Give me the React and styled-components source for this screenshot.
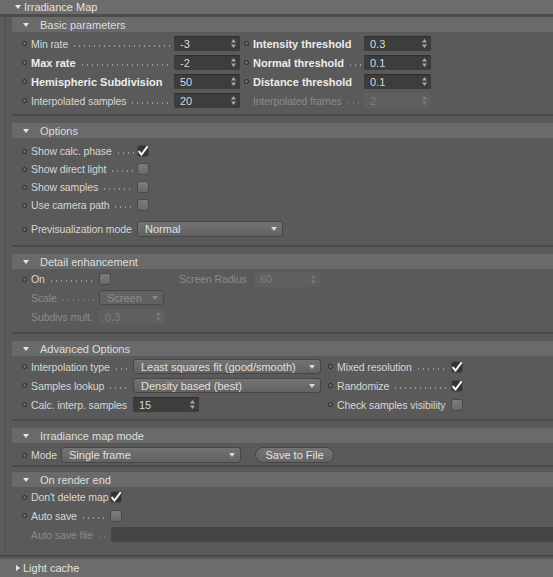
import styled, { createGlobalStyle } from 'styled-components';

const GlobalStyle = createGlobalStyle`
  html, body {
    margin: 0;
    padding: 0;
    background: #5a5a5a;
  }
  body {
    width: 553px;
    height: 577px;
    overflow: hidden;
    font-family: "Liberation Sans", Arial, sans-serif;
    font-size: 11px;
    color: #d4d4d4;
  }
`;

const Window = styled.div`
  width: 553px;
  height: 577px;
  overflow: hidden;
  background: #5a5a5a;
  display: flex;
  flex-direction: column;
`;

const GroupBar = styled.div`
  flex: none;
  height: ${(p) => p.$h || 14}px;
  background: #6c6c6c;
  display: flex;
  align-items: center;
  gap: 3px;
  padding-left: ${(p) => p.$pad}px;
  color: #e2e2e2;
  white-space: nowrap;
`;

const TriDown = styled.span`
  width: 0;
  height: 0;
  border-left: ${(p) => p.$s || 3}px solid transparent;
  border-right: ${(p) => p.$s || 3}px solid transparent;
  border-top: ${(p) => (p.$s || 3) + 1}px solid #e6e6e6;
`;

const TriRight = styled.span`
  width: 0;
  height: 0;
  border-top: 3px solid transparent;
  border-bottom: 3px solid transparent;
  border-left: 4px solid #e6e6e6;
`;

const Group = styled.div`
  flex: none;
  border-top: 3px solid #4c4c4c;
  border-bottom: 2px solid #4a4a4a;
  padding-left: 12px;
  margin-bottom: 2px;
  box-shadow: inset 4px 0 0 #5d5d5d, inset 5px 0 0 #505050;
`;

const Section = styled.div`
  border-bottom: ${(p) => (p.$last ? 'none' : '2px solid #4b4b4b')};
  margin-bottom: ${(p) => p.$mb || 0}px;
`;

const SectionHeader = styled.div`
  height: 15px;
  background: #6a6a6a;
  display: flex;
  align-items: center;
  gap: 11px;
  padding-left: 11px;
  color: #dedede;
  white-space: nowrap;
`;

const Body = styled.div`
  padding: ${(p) => p.$pt}px 0 ${(p) => p.$pb}px 10px;
`;

const Row = styled.div`
  display: flex;
  align-items: center;
  height: ${(p) => p.$h}px;
  margin-top: ${(p) => p.$mt || 0}px;
`;

const Field = styled.div`
  display: flex;
  align-items: center;
  flex: none;
  width: ${(p) => (p.$w ? `${p.$w}px` : 'auto')};
  margin-left: ${(p) => p.$ml || 0}px;
`;

const Dot = styled.span`
  flex: none;
  width: 3px;
  height: 3px;
  border-radius: 50%;
  border: 1px solid #262626;
  background: #6f6f6f;
  margin-right: 4px;
  visibility: ${(p) => (p.$off ? 'hidden' : 'visible')};
`;

const Label = styled.span`
  flex: none;
  display: flex;
  align-items: baseline;
  width: ${(p) => p.$w}px;
  margin-right: 3px;
  white-space: nowrap;
  font-size: ${(p) => (p.$bold ? 11 : 10.5)}px;
  letter-spacing: ${(p) => (p.$bold ? 0 : -0.1)}px;
  color: ${(p) => (p.$disabled ? '#8a8a8a' : p.$bold ? '#ececec' : '#d6d6d6')};
  font-weight: ${(p) => (p.$bold ? 'bold' : 'normal')};
`;

const Leader = styled.span`
  flex: 1;
  min-width: 0;
  height: 2px;
  margin-left: 4px;
  align-self: flex-end;
  margin-bottom: 3px;
  background-image: radial-gradient(circle, ${(p) => (p.$disabled ? '#787878' : '#9a9a9a')} 0.6px, transparent 1px);
  background-size: 5px 2px;
  background-repeat: repeat-x;
`;

const NumBox = styled.div`
  flex: none;
  position: relative;
  width: ${(p) => p.$w}px;
  height: 15px;
  border-radius: 2px;
  background: ${(p) => (p.$disabled ? '#5f5f5f' : '#3d3d3d')};
  box-shadow: ${(p) => (p.$disabled ? 'none' : 'inset 0 1px 1px #2e2e2e')};
  color: ${(p) => (p.$disabled ? '#7e7e7e' : '#d8d8d8')};
  display: flex;
  align-items: center;
  padding-left: 6px;
  box-sizing: border-box;
`;

const Spin = styled.svg`
  position: absolute;
  right: 4px;
  top: 3px;
`;

const TextBox = styled.div`
  flex: 1;
  height: 15px;
  background: #454545;
  border-radius: 2px 0 0 2px;
`;

const Select = styled.div`
  flex: none;
  position: relative;
  width: ${(p) => p.$w}px;
  height: ${(p) => p.$h || 15}px;
  box-sizing: border-box;
  border: 1px solid #474747;
  border-radius: 3px;
  background: ${(p) =>
    p.$disabled ? '#626262' : 'linear-gradient(#737373, #626262)'};
  color: ${(p) => (p.$disabled ? '#8c8c8c' : '#e0e0e0')};
  display: flex;
  align-items: center;
  padding-left: 7px;
  white-space: nowrap;
`;

const Caret = styled.span`
  position: absolute;
  right: 5px;
  top: 50%;
  margin-top: -2px;
  width: 0;
  height: 0;
  border-left: 3px solid transparent;
  border-right: 3px solid transparent;
  border-top: 4px solid ${(p) => (p.$disabled ? '#8a8a8a' : '#d8d8d8')};
`;

const Check = styled.span`
  flex: none;
  width: 12px;
  height: 12px;
  box-sizing: border-box;
  border-radius: 3px;
  border: 1px solid #4a4a4a;
  background: ${(p) => (p.$on ? '#333333' : 'linear-gradient(#7d7d7d, #696969)')};
  display: flex;
  align-items: center;
  justify-content: center;
`;

const Button = styled.div`
  flex: none;
  width: 79px;
  height: 16px;
  margin-left: 14px;
  box-sizing: border-box;
  border: 1px solid #454545;
  border-radius: 8px;
  background: linear-gradient(#747474, #646464);
  color: #e4e4e4;
  display: flex;
  align-items: center;
  justify-content: center;
`;

const Num = ({ value, w = 66, disabled }) => (
  <NumBox $w={w} $disabled={disabled}>
    {value}
    <Spin width="5" height="9" viewBox="0 0 5 9">
      <path d="M2.5 0 L5 3.5 L0 3.5 Z M2.5 9 L5 5.5 L0 5.5 Z" fill={disabled ? '#7a7a7a' : '#a8a8a8'} />
    </Spin>
  </NumBox>
);

const Drop = ({ value, w, h, disabled }) => (
  <Select $w={w} $h={h} $disabled={disabled}>
    {value}
    <Caret $disabled={disabled} />
  </Select>
);

const Box = ({ on }) => (
  <Check $on={on}>
    {on && (
      <svg width="10" height="10" viewBox="0 0 10 10">
        <path d="M1.2 5.6 L3.4 8.6 L9.2 0.8" stroke="#f4f4f4" strokeWidth="2" fill="none" strokeLinecap="round" strokeLinejoin="round" />
      </svg>
    )}
  </Check>
);

const Lbl = ({ w, text, bold, disabled, dots = true }) => (
  <Label $w={w} $bold={bold} $disabled={disabled}>
    {text}
    {dots && <Leader $disabled={disabled} />}
  </Label>
);

const Head = ({ title }) => (
  <SectionHeader>
    <TriDown $s={3} />
    {title}
  </SectionHeader>
);

export default function App() {
  return (
    <Window>
      <GlobalStyle />
      <GroupBar $pad={15}>
        <TriDown $s={3} />
        Irradiance Map
      </GroupBar>
      <Group>
        <Section $mb={7}>
          <Head title="Basic parameters" />
          <Body $pt={2} $pb={4}>
            <Row $h={19}>
              <Field $w={222}>
                <Dot />
                <Lbl w={140} text="Min rate" />
                <Num value="-3" />
              </Field>
              <Field>
                <Dot />
                <Lbl w={108} text="Intensity threshold" bold dots={false} />
                <Num value="0.3" w={67} />
              </Field>
            </Row>
            <Row $h={19}>
              <Field $w={222}>
                <Dot />
                <Lbl w={140} text="Max rate" bold />
                <Num value="-2" />
              </Field>
              <Field>
                <Dot />
                <Lbl w={108} text="Normal threshold" bold />
                <Num value="0.1" w={67} />
              </Field>
            </Row>
            <Row $h={19}>
              <Field $w={222}>
                <Dot />
                <Lbl w={140} text="Hemispheric Subdivision" bold dots={false} />
                <Num value="50" />
              </Field>
              <Field>
                <Dot />
                <Lbl w={108} text="Distance threshold" bold dots={false} />
                <Num value="0.1" w={67} />
              </Field>
            </Row>
            <Row $h={19}>
              <Field $w={222}>
                <Dot />
                <Lbl w={140} text="Interpolated samples" />
                <Num value="20" />
              </Field>
              <Field>
                <Dot $off />
                <Lbl w={108} text="Interpolated frames" disabled />
                <Num value="2" w={67} disabled />
              </Field>
            </Row>
          </Body>
        </Section>

        <Section $mb={7}>
          <Head title="Options" />
          <Body $pt={4} $pb={7}>
            <Row $h={18}>
              <Dot />
              <Lbl w={103} text="Show calc. phase" />
              <Box on />
            </Row>
            <Row $h={18}>
              <Dot />
              <Lbl w={103} text="Show direct light" />
              <Box />
            </Row>
            <Row $h={18}>
              <Dot />
              <Lbl w={103} text="Show samples" />
              <Box />
            </Row>
            <Row $h={18}>
              <Dot />
              <Lbl w={103} text="Use camera path" />
              <Box />
            </Row>
            <Row $h={18} $mt={6}>
              <Dot />
              <Lbl w={103} text="Previsualization mode" dots={false} />
              <Drop value="Normal" w={146} h={16} />
            </Row>
          </Body>
        </Section>

        <Section $mb={7}>
          <Head title="Detail enhancement" />
          <Body $pt={1} $pb={6}>
            <Row $h={18}>
              <Dot />
              <Lbl w={65} text="On" />
              <Box />
              <Field $ml={68}>
                <Lbl w={72} text="Screen Radius" disabled dots={false} />
                <Num value="60" w={66} disabled />
              </Field>
            </Row>
            <Row $h={19}>
              <Dot $off />
              <Lbl w={65} text="Scale" disabled />
              <Drop value="Screen" w={65} disabled />
            </Row>
            <Row $h={19}>
              <Dot $off />
              <Lbl w={65} text="Subdivs mult." disabled dots={false} />
              <Num value="0.3" w={66} disabled />
            </Row>
          </Body>
        </Section>

        <Section $mb={7}>
          <Head title="Advanced Options" />
          <Body $pt={1} $pb={5}>
            <Row $h={19}>
              <Field $w={306}>
                <Dot />
                <Lbl w={99} text="Interpolation type" />
                <Drop value="Least squares fit (good/smooth)" w={188} />
              </Field>
              <Field>
                <Dot />
                <Lbl w={111} text="Mixed resolution" />
                <Box on />
              </Field>
            </Row>
            <Row $h={19}>
              <Field $w={306}>
                <Dot />
                <Lbl w={99} text="Samples lookup" />
                <Drop value="Density based (best)" w={188} />
              </Field>
              <Field>
                <Dot />
                <Lbl w={111} text="Randomize" />
                <Box on />
              </Field>
            </Row>
            <Row $h={19}>
              <Field $w={306}>
                <Dot />
                <Lbl w={99} text="Calc. interp. samples" dots={false} />
                <Num value="15" w={66} />
              </Field>
              <Field>
                <Dot />
                <Lbl w={111} text="Check samples visibility" dots={false} />
                <Box />
              </Field>
            </Row>
          </Body>
        </Section>

        <Section $mb={5}>
          <Head title="Irradiance map mode" />
          <Body $pt={2} $pb={0}>
            <Row $h={20}>
              <Dot />
              <Lbl w={27} text="Mode" dots={false} />
              <Drop value="Single frame" w={180} h={16} />
              <Button>Save to File</Button>
            </Row>
          </Body>
        </Section>

        <Section $last>
          <Head title="On render end" />
          <Body $pt={1} $pb={11}>
            <Row $h={18}>
              <Dot />
              <Lbl w={76} text="Don't delete map" dots={false} />
              <Box on />
            </Row>
            <Row $h={19}>
              <Dot />
              <Lbl w={76} text="Auto save" />
              <Box />
            </Row>
            <Row $h={19}>
              <Dot $off />
              <Lbl w={77} text="Auto save file" disabled />
              <TextBox />
            </Row>
          </Body>
        </Section>
      </Group>
      <GroupBar $pad={16} $h={18}>
        <TriRight />
        Light cache
      </GroupBar>
    </Window>
  );
}
